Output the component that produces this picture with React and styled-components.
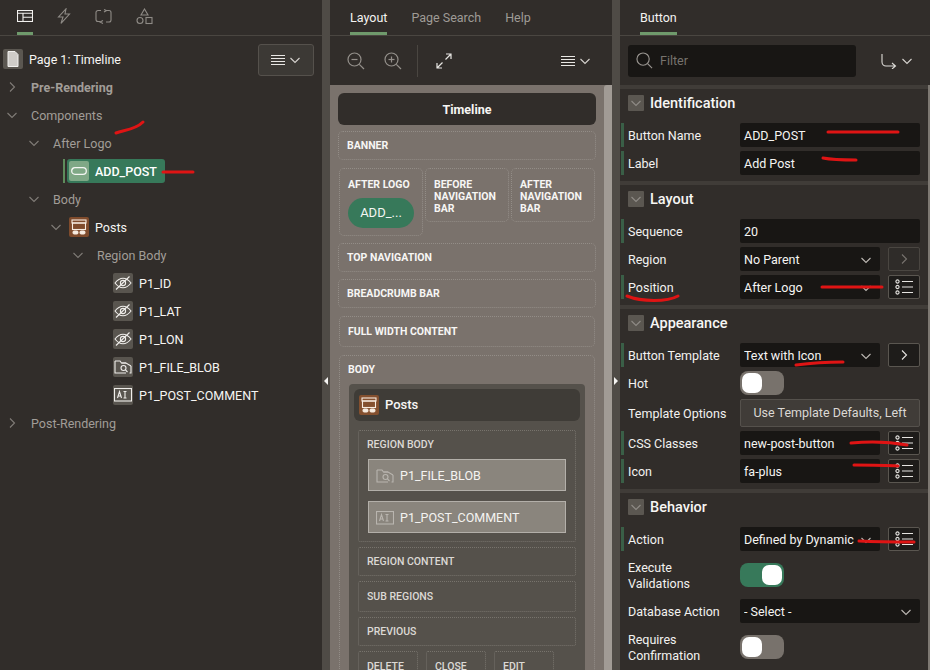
import React from 'react';
import styled, { createGlobalStyle } from 'styled-components';

const Global = createGlobalStyle`
  html, body { margin: 0; padding: 0; background: #312d2a; }
  * { box-sizing: border-box; }
`;

const Page = styled.div`
  position: relative; width: 930px; height: 670px; overflow: hidden;
  display: flex; background: #312d2a; color: #fff;
  font-family: Roboto, "Noto Sans", "Liberation Sans", sans-serif; font-size: 12.5px;
`;
const Pane = styled.div`
  width: ${p => p.$w}px; flex: none; height: 100%; display: flex; flex-direction: column; overflow: hidden;
`;
const Splitter = styled.div`
  width: 8px; flex: none; height: 100%; background: #4f4b46; display: flex; align-items: center; justify-content: center;
  padding-top: 91px;
`;
const Arrow = styled.span`
  width: 0; height: 0; border-top: 4px solid transparent; border-bottom: 4px solid transparent;
  ${p => p.$right ? 'border-left: 4px solid #f5f4f2;' : 'border-right: 4px solid #f5f4f2;'}
`;
const TabBar = styled.div`
  height: 36px; flex: none; display: flex; gap: ${p => p.$gap}px; padding-left: ${p => p.$pad}px;
  border-bottom: 1px solid #4a4641; 
`;
const Tab = styled.div`
  height: 35px; display: flex; align-items: center; justify-content: center; padding-top: ${p => p.$icon ? 0 : 2}px;
  color: ${p => p.$active ? '#f4f3f1' : '#9f9b96'}; font-size: 12.5px;
  border-bottom: 3px solid ${p => p.$active ? '#6f9a6c' : 'transparent'};
  min-width: ${p => p.$w || 0}px;
`;
const ToolBar = styled.div`
  height: 49px; flex: none; display: flex; align-items: center; padding: 0 8px;
`;
const OutlineBody = styled.div`
  flex: 1; min-height: 0; display: flex; align-items: flex-start; justify-content: space-between; padding-right: 8px;
`;
const MenuBtn = styled.div`
  width: 56px; height: 32px; flex: none; margin-top: 8px; background: #3c3935; border: 1px solid #55514c; border-radius: 3px;
  display: flex; align-items: center; justify-content: center; gap: 4px;
`;
const PlainMenu = styled.div`
  margin-left: auto; margin-right: ${p => p.$mr}px; display: flex; align-items: center; gap: 4px;
`;
const Tree = styled.div`
  padding-top: 9px; width: 250px; flex: none;
`;
const Row = styled.div`
  height: 28px; display: flex; align-items: center; padding-left: ${p => p.$in}px;
  color: ${p => p.$muted ? '#a19d98' : '#f6f5f3'}; white-space: nowrap; font-weight: ${p => p.$bold ? 700 : 400};
`;
const ChevSlot = styled.span`
  width: 22px; flex: none; display: flex; justify-content: center; margin-right: ${p => p.$gap}px;
`;
const NodeIcon = styled.span`
  width: 20px; height: 20px; flex: none; border-radius: 2px; background: ${p => p.$bg};
  display: flex; align-items: center; justify-content: center; margin-right: 6px;
`;
const SelectedMark = styled.span`
  width: 2px; height: 24px; background: #5e8c5c; margin-right: 2px;
`;
const SelectedNode = styled.span`
  width: 98px; height: 24px; background: #37795a; border-radius: 3px; display: flex; align-items: center;
  padding-left: 2px; color: #fff; font-weight: 500;
`;
const SelIcon = styled.span`
  width: 20px; height: 20px; background: #7fa886; border-radius: 2px; display: flex; align-items: center; justify-content: center; margin-right: 6px;
`;
const Toolbtn = styled.span`
  display: flex; margin-right: ${p => p.$mr}px; margin-left: ${p => p.$ml || 0}px;
`;
const Sep = styled.span`
  width: 1px; height: 32px; background: #4a4641; margin-right: 18px;
`;
const CanvasWrap = styled.div`
  flex: 1; display: flex; min-height: 0; background: #7a736d;
`;
const Canvas = styled.div`
  width: 274px; flex: none; padding: 8px 8px 0; background: #7a726c;
`;
const Scroll = styled.div`
  width: 8px; flex: none; background: #a19b95; border-radius: 3px 0 0 0;
`;
const TitleBar = styled.div`
  height: 32px; background: #312d2a; border-radius: 6px; display: flex; align-items: center; justify-content: center;
  font-weight: 700; font-size: 12.5px; margin-bottom: 6px; color: #f7f6f4;
`;
const Zone = styled.div`
  height: ${p => p.$h ? p.$h + 'px' : 'auto'}; border: 1px dotted ${p => p.$dark ? '#77736c' : '#938d87'}; border-radius: ${p => p.$dark ? 2 : 5}px;
  margin: 0 ${p => p.$inset || 0}px ${p => p.$mb || 0}px; padding: ${p => p.$pad || '1px 8px 0'}; display: ${p => p.$block ? 'block' : 'flex'};
  align-items: center; flex: none;
  width: ${p => p.$w ? p.$w + 'px' : 'auto'};
  font-size: 10.5px; font-weight: ${p => p.$dark ? 500 : 700}; line-height: 12px; color: ${p => p.$dark ? '#dcd9d5' : '#f7f6f4'};
`;
const ZoneRow = styled.div`
  display: flex; gap: 2px; align-items: flex-start; margin: 0 2px 7px 1px;
`;
const ThirdLabel = styled.div`
  padding-top: 10px; margin-right: -4px;
`;
const RegionLabel = styled.div`
  padding: 0 8px 8px;
`;
const GreenPill = styled.div`
  width: 66px; height: 30px; background: #37795a; border-radius: 15px; margin-top: 7px; display: flex; align-items: center; justify-content: center;
  font-size: 13px; font-weight: 400; color: #f3f6f3;
`;
const Region = styled.div`
  margin: 8px 1px 0; background: #55514b; border-radius: 4px; padding: 5px 5px 0; height: 320px;
`;
const RegionHead = styled.div`
  height: 32px; background: #3f3c37; border-radius: 6px; display: flex; align-items: center; padding: 0 0 0 5px;
  font-size: 13px; font-weight: 500; color: #f7f6f4; margin-bottom: 9px;
`;
const RegionStack = styled.div`
  margin: 0 4px;
`;
const ItemBox = styled.div`
  height: 32px; background: #8a857d; border: 1px solid #b3afa9; display: flex; align-items: center; padding: 1px 0 0 7px;
  font-size: 12.5px; font-weight: 400; color: #f4f3f1; margin: 0 9px 10px 9px; gap: 6px;
`;
const ButtonsRow = styled.div`
  display: flex; gap: 8px;
`;
const Filter = styled.div`
  width: 228px; height: 32px; background: #181614; border-radius: 3px; display: flex; align-items: center; padding-left: 8px; gap: 7px;
  color: #77736e; font-size: 12.5px;
`;
const Props = styled.div`
  flex: 1; min-height: 0; overflow: hidden; border-right: 2px solid #7d7872;
`;
const Section = styled.section`
  border-top: 4px solid #403c38; padding-bottom: 6px;
`;
const SecHead = styled.div`
  height: 34px; display: flex; align-items: center; padding: 0 0 6px 8px; font-size: 14.5px; font-weight: 500; color: #f7f6f4; gap: 6px;
`;
const SecToggle = styled.span`
  width: 16px; height: 16px; background: #5b5751; border-radius: 1px; display: flex; align-items: center; justify-content: center;
`;
const Rows = styled.div`
  display: flex; flex-direction: column; gap: 4px;
`;
const PropRow = styled.div`
  display: grid; grid-template-columns: 112px minmax(0, 1fr); align-items: center; min-height: ${p => p.$tall ? 40 : 24}px;
  margin-left: 1px; padding-left: 4px; padding-right: 8px;
  border-left: 3px solid ${p => p.$req ? '#3a5f47' : 'transparent'}; font-size: 12.5px; color: #f3f2f0; line-height: 16px;
`;
const PropLabel = styled.span`
  padding-top: 1px;
`;
const Field = styled.div`
  display: flex; gap: 8px; align-items: center; min-width: 0;
`;
const Input = styled.div`
  flex: 1; min-width: 0; height: 24px; background: #181614; border-radius: 2px; display: flex; align-items: center; padding: 1px ${p => p.$pr || 4}px 0 4px;
  color: #f5f4f2; font-size: 12.5px; white-space: nowrap;
`;
const Clip = styled.span`
  flex: 1; min-width: 0; overflow: hidden; margin-right: 6px;
`;
const SquareBtn = styled.div`
  width: 32px; height: 24px; flex: none; background: ${p => p.$dim ? '#2f2c29' : '#1e1c1a'}; border: 1px solid ${p => p.$dim ? '#4a4641' : '#5a5650'}; border-radius: 2px;
  display: flex; align-items: center; justify-content: center;
`;
const Toggle = styled.div`
  width: 44px; height: 24px; border-radius: 8px; background: ${p => p.$on ? '#37795a' : '#78726c'}; padding: 2px;
  display: flex; justify-content: ${p => p.$on ? 'flex-end' : 'flex-start'};
`;
const Knob = styled.span`
  width: 20px; height: 20px; background: #fff; border-radius: 7px;
`;
const WideBtn = styled.div`
  height: 28px; background: #403c38; border: 1px solid #55514c; border-radius: 2px; display: flex; align-items: center; justify-content: center;
  color: #dbd8d4; font-size: 12.5px; white-space: nowrap;
`;
const Strokes = styled.svg`
  position: absolute; left: 0; top: 0; pointer-events: none;
`;

const Chev = ({ dir = 'down', c = '#807c77' }) => (
  <svg width="12" height="12" viewBox="0 0 12 12" fill="none" stroke={c} strokeWidth="1.1">
    {dir === 'down' ? <path d="M1.5 4l4.5 4.5L10.5 4" /> : <path d="M4 1.5L8.5 6 4 10.5" />}
  </svg>
);
const Burger = () => (
  <svg width="14" height="12" viewBox="0 0 14 12" stroke="#e9e7e4" strokeWidth="1">
    <path d="M0 1.5h14M0 4.5h14M0 7.5h14M0 10.5h14" />
  </svg>
);
const BurgerMenu = () => (<><Burger /><Chev c="#d6d3cf" /></>);
const ListIcon = () => (
  <svg width="18" height="16" viewBox="0 0 18 16" fill="none" stroke="#e6e4e1" strokeWidth="1.1">
    <circle cx="2.5" cy="2.5" r="1.6" /><circle cx="2.5" cy="8" r="1.6" /><circle cx="2.5" cy="13.5" r="1.6" />
    <path d="M7 2.5h11M7 8h11M7 13.5h11" />
  </svg>
);
const Eye = () => (
  <svg width="18" height="14" viewBox="0 0 18 14" fill="none" stroke="#f0eeeb" strokeWidth="1.1">
    <path d="M1 7c2.5-3.2 5-4.8 8-4.8S14.500 3.800 17 7c-2.500 3.200-5 4.800-8 4.800S3.500 10.200 1 7z" />
    <circle cx="9" cy="7" r="2.6" /><path d="M2 13.500L15.500 .5" />
  </svg>
);
const FolderSearch = ({ c = '#f0eeeb' }) => (
  <svg width="18" height="14" viewBox="0 0 18 14" fill="none" stroke={c} strokeWidth="1.1">
    <path d="M1 1h5l1.500 2H12M1 1v12h11M17 6v7h-1.500" />
    <path d="M7.500 3L12 3l5 3" />
    <circle cx="9.500" cy="8" r="2.500" /><path d="M11.500 10l2 2" />
  </svg>
);
const TextArea = ({ c = '#f0eeeb' }) => (
  <svg width="18" height="14" viewBox="0 0 18 14" fill="none" stroke={c} strokeWidth="1.1">
    <rect x=".5" y=".5" width="17" height="12.500" />
    <path d="M3.500 10l2-6.500 2 6.500M4.200 8h2.600M11 3.500v6.500M9.500 3.500h3M9.500 10h3" />
  </svg>
);
const RegionGlyph = ({ s = 16 }) => (
  <svg width={s} height={s} viewBox="0 0 16 16" fill="none" stroke="#f7ece1" strokeWidth="1.1">
    <rect x="1" y="1" width="14" height="3" /><rect x="1.500" y="4" width="13" height="6.500" />
    <rect x="2" y="12" width="5" height="3" rx="1.400" fill="#f7ece1" /><rect x="9" y="12" width="5" height="3" rx="1.400" fill="#f7ece1" />
  </svg>
);
const Mag = ({ s = 18, c = '#94908b', plus, bare }) => (
  <svg width={s} height={s} viewBox="0 0 18 18" fill="none" stroke={c} strokeWidth="1.200">
    <circle cx="7.500" cy="7.500" r="6.500" /><path d="M12.300 12.300L17 17" />
    {!bare && <path d="M4.500 7.500h6" />}{plus && <path d="M7.500 4.500v6" />}
  </svg>
);

function TreeIconRow({ name, icon }) {
  return <Row $in={113}><NodeIcon $bg="#59554f">{icon}</NodeIcon>{name}</Row>;
}

function FieldRow({ label, req, children, tall }) {
  return <PropRow $req={req} $tall={tall}><PropLabel>{label}</PropLabel><Field>{children}</Field></PropRow>;
}
function Select({ text }) {
  return <Input $pr={8}><Clip>{text}</Clip><Chev c="#bcb8b3" /></Input>;
}

export default function App() {
  return (
    <Page>
      <Global />
      <Pane $w={322}>
        <TabBar $gap={24} $pad={17}>
          <Tab $icon $active $w={16}>
            <svg width="16" height="12" viewBox="0 0 16 12" fill="none" stroke="#f2f1ef" strokeWidth="1.100"><rect x=".5" y=".5" width="15" height="11" /><path d="M.5 3.200h15M6 3.200v8.300M6 7.200h9.500" /></svg>
          </Tab>
          <Tab $icon $w={14}>
            <svg width="14" height="16" viewBox="0 0 14 16" fill="none" stroke="#8f8b86" strokeWidth="1.100"><path d="M9 .8L1.500 9H6l-2 6.300L12.500 6H8z" /></svg>
          </Tab>
          <Tab $icon $w={16}>
            <svg width="17" height="15" viewBox="0 0 17 15" fill="none" stroke="#8f8b86" strokeWidth="1.100"><path d="M6 1.500H3A2 2 0 0 0 1 3.500v7a2 2 0 0 0 2 2h2M11 13h3a2 2 0 0 0 2-2V3.500a2 2 0 0 0-2-2h-2.500M9 .5l2.500 1-2.500 1.500M8 11.500L5 13l3 1.500" /></svg>
          </Tab>
          <Tab $icon $w={16}>
            <svg width="17" height="17" viewBox="0 0 17 17" fill="none" stroke="#8f8b86" strokeWidth="1.100"><path d="M8.500 1l3.500 6H5z" /><circle cx="4" cy="12.500" r="3" /><rect x="10" y="9.500" width="6" height="6" /></svg>
          </Tab>
        </TabBar>
        <OutlineBody>
          <Tree>
            <Row $in={3}>
              <NodeIcon $bg="#5b5751">
                <svg width="12" height="16" viewBox="0 0 12 16" fill="#cfccc8" stroke="#f2f1ef" strokeWidth="1"><path d="M1 .5h7l3 3v12H1z" /></svg>
              </NodeIcon>Page 1: Timeline
            </Row>
            <Row $in={1} $muted $bold><ChevSlot $gap={8}><Chev dir="right" /></ChevSlot>Pre-Rendering</Row>
            <Row $in={1} $muted><ChevSlot $gap={8}><Chev /></ChevSlot>Components</Row>
            <Row $in={23} $muted><ChevSlot $gap={8}><Chev /></ChevSlot>After Logo</Row>
            <Row $in={63}>
              <SelectedMark />
              <SelectedNode>
                <SelIcon><svg width="16" height="8" viewBox="0 0 16 8" fill="none" stroke="#f4f6f3" strokeWidth="1.300"><rect x=".7" y=".7" width="14.600" height="6.600" rx="3.300" /></svg></SelIcon>
                ADD_POST
              </SelectedNode>
            </Row>
            <Row $in={23} $muted><ChevSlot $gap={8}><Chev /></ChevSlot>Body</Row>
            <Row $in={45}><ChevSlot $gap={2}><Chev /></ChevSlot><NodeIcon $bg="#7f4b2c"><RegionGlyph /></NodeIcon>Posts</Row>
            <Row $in={67} $muted><ChevSlot $gap={8}><Chev /></ChevSlot>Region Body</Row>
            <TreeIconRow name="P1_ID" icon={<Eye />} />
            <TreeIconRow name="P1_LAT" icon={<Eye />} />
            <TreeIconRow name="P1_LON" icon={<Eye />} />
            <TreeIconRow name="P1_FILE_BLOB" icon={<FolderSearch />} />
            <TreeIconRow name="P1_POST_COMMENT" icon={<TextArea />} />
            <Row $in={1} $muted><ChevSlot $gap={8}><Chev dir="right" /></ChevSlot>Post-Rendering</Row>
          </Tree>
          <MenuBtn><BurgerMenu /></MenuBtn>
        </OutlineBody>
      </Pane>
      <Splitter><Arrow /></Splitter>
      <Pane $w={282}>
        <TabBar $gap={24} $pad={20}>
          <Tab $active>Layout</Tab>
          <Tab>Page Search</Tab>
          <Tab>Help</Tab>
        </TabBar>
        <ToolBar>
          <Toolbtn $ml={9} $mr={19}><Mag /></Toolbtn>
          <Toolbtn $mr={15}><Mag plus /></Toolbtn>
          <Sep />
          <svg width="16" height="16" viewBox="0 0 16 16" fill="none" stroke="#e8e6e3" strokeWidth="1.200"><path d="M9.500 6.500L15 1M10 1h5v5M6.500 9.500L1 15M1 10v5h5" /></svg>
          <PlainMenu $mr={13}><BurgerMenu /></PlainMenu>
        </ToolBar>
        <CanvasWrap>
          <Canvas>
            <TitleBar>Timeline</TitleBar>
            <Zone $h={29} $mb={8}>BANNER</Zone>
            <ZoneRow>
              <Zone $w={84} $h={68} $block $pad="0 8px">
                <ThirdLabel>AFTER LOGO</ThirdLabel>
                <GreenPill>ADD_...</GreenPill>
              </Zone>
              <Zone $w={84} $h={54} $block $pad="0 8px"><ThirdLabel>BEFORE NAVIGATION BAR</ThirdLabel></Zone>
              <Zone $w={84} $h={54} $block $pad="0 8px"><ThirdLabel>AFTER NAVIGATION BAR</ThirdLabel></Zone>
            </ZoneRow>
            <Zone $h={29} $mb={7}>TOP NAVIGATION</Zone>
            <Zone $h={29} $mb={8}>BREADCRUMB BAR</Zone>
            <Zone $h={31} $mb={8} $inset={1}>FULL WIDTH CONTENT</Zone>
            <Zone $block $inset={1} $pad="8px 8px 0" $h={320}>
              <div>BODY</div>
              <Region>
                <RegionHead><NodeIcon $bg="#84502f"><RegionGlyph /></NodeIcon>Posts</RegionHead>
                <RegionStack>
                  <Zone $block $dark $h={112} $mb={5} $pad="8px 0 0 0">
                    <RegionLabel>REGION BODY</RegionLabel>
                    <ItemBox><FolderSearch c="#b9b5af" />P1_FILE_BLOB</ItemBox>
                    <ItemBox><TextArea c="#b9b5af" />P1_POST_COMMENT</ItemBox>
                  </Zone>
                  <Zone $dark $h={29} $mb={5}>REGION CONTENT</Zone>
                  <Zone $dark $h={31} $mb={5}>SUB REGIONS</Zone>
                  <Zone $dark $h={29} $mb={5}>PREVIOUS</Zone>
                  <ButtonsRow>
                    <Zone $dark $block $pad="9px 8px 0" $w={60} $h={40}>DELETE</Zone>
                    <Zone $dark $block $pad="9px 8px 0" $w={60} $h={40}>CLOSE</Zone>
                    <Zone $dark $block $pad="9px 8px 0" $w={60} $h={40}>EDIT</Zone>
                  </ButtonsRow>
                </RegionStack>
              </Region>
            </Zone>
          </Canvas>
          <Scroll />
        </CanvasWrap>
      </Pane>
      <Splitter><Arrow $right /></Splitter>
      <Pane $w={310}>
        <TabBar $gap={24} $pad={20}>
          <Tab $active>Button</Tab>
        </TabBar>
        <ToolBar>
          <Filter><Mag s={17} bare c="#9a9691" />Filter</Filter>
          <PlainMenu $mr={9}>
            <svg width="16" height="16" viewBox="0 0 16 16" fill="none" stroke="#dedcd8" strokeWidth="1.100"><path d="M1 1v8a4 4 0 0 0 4 4h9M11 10l3.500 3-3.500 3" /></svg>
            <Chev c="#d6d3cf" />
          </PlainMenu>
        </ToolBar>
        <Props>
          <Section>
            <SecHead><SecToggle><Chev c="#8f8b86" /></SecToggle>Identification</SecHead>
            <Rows>
              <FieldRow label="Button Name" req><Input>ADD_POST</Input></FieldRow>
              <FieldRow label="Label" req><Input>Add Post</Input></FieldRow>
            </Rows>
          </Section>
          <Section>
            <SecHead><SecToggle><Chev c="#8f8b86" /></SecToggle>Layout</SecHead>
            <Rows>
              <FieldRow label="Sequence" req><Input>20</Input></FieldRow>
              <FieldRow label="Region"><Select text="No Parent" /><SquareBtn $dim><Chev dir="right" c="#77736e" /></SquareBtn></FieldRow>
              <FieldRow label="Position" req><Select text="After Logo" /><SquareBtn><ListIcon /></SquareBtn></FieldRow>
            </Rows>
          </Section>
          <Section>
            <SecHead><SecToggle><Chev c="#8f8b86" /></SecToggle>Appearance</SecHead>
            <Rows>
              <FieldRow label="Button Template" req><Select text="Text with Icon" /><SquareBtn><Chev dir="right" c="#e6e4e1" /></SquareBtn></FieldRow>
              <FieldRow label="Hot"><Toggle><Knob /></Toggle></FieldRow>
              <PropRow><PropLabel>Template Options</PropLabel><WideBtn>Use Template Defaults, Left</WideBtn></PropRow>
              <FieldRow label="CSS Classes" req><Input>new-post-button</Input><SquareBtn><ListIcon /></SquareBtn></FieldRow>
              <FieldRow label="Icon" req><Input>fa-plus</Input><SquareBtn><ListIcon /></SquareBtn></FieldRow>
            </Rows>
          </Section>
          <Section>
            <SecHead><SecToggle><Chev c="#8f8b86" /></SecToggle>Behavior</SecHead>
            <Rows>
              <FieldRow label="Action" req><Select text="Defined by Dynamic Action" /><SquareBtn><ListIcon /></SquareBtn></FieldRow>
              <FieldRow label={<>Execute<br />Validations</>} tall><Toggle $on><Knob /></Toggle></FieldRow>
              <FieldRow label="Database Action"><Select text="- Select -" /></FieldRow>
              <FieldRow label={<>Requires<br />Confirmation</>} tall><Toggle><Knob /></Toggle></FieldRow>
            </Rows>
          </Section>
        </Props>
      </Pane>
      <Strokes width="930" height="670" viewBox="0 0 930 670" fill="none" stroke="#df1414" strokeWidth="3" strokeLinecap="round">
        <path d="M116 133c8-3 19-3 27-11" />
        <path d="M163 172h30" />
        <path d="M828 132h70" />
        <path d="M823 158c10 2 22 2 33 2" />
        <path d="M627 296c15 6 40 6 51 0" />
        <path d="M822 287h60" />
        <path d="M796 365c15-2 32-3 47-3" />
        <path d="M851 443c20-2 40-1 56 2" />
        <path d="M854 465c15 0 30 0 44 1" />
        <path d="M859 541c20 1 40 1 55 1" />
      </Strokes>
    </Page>
  );
}
